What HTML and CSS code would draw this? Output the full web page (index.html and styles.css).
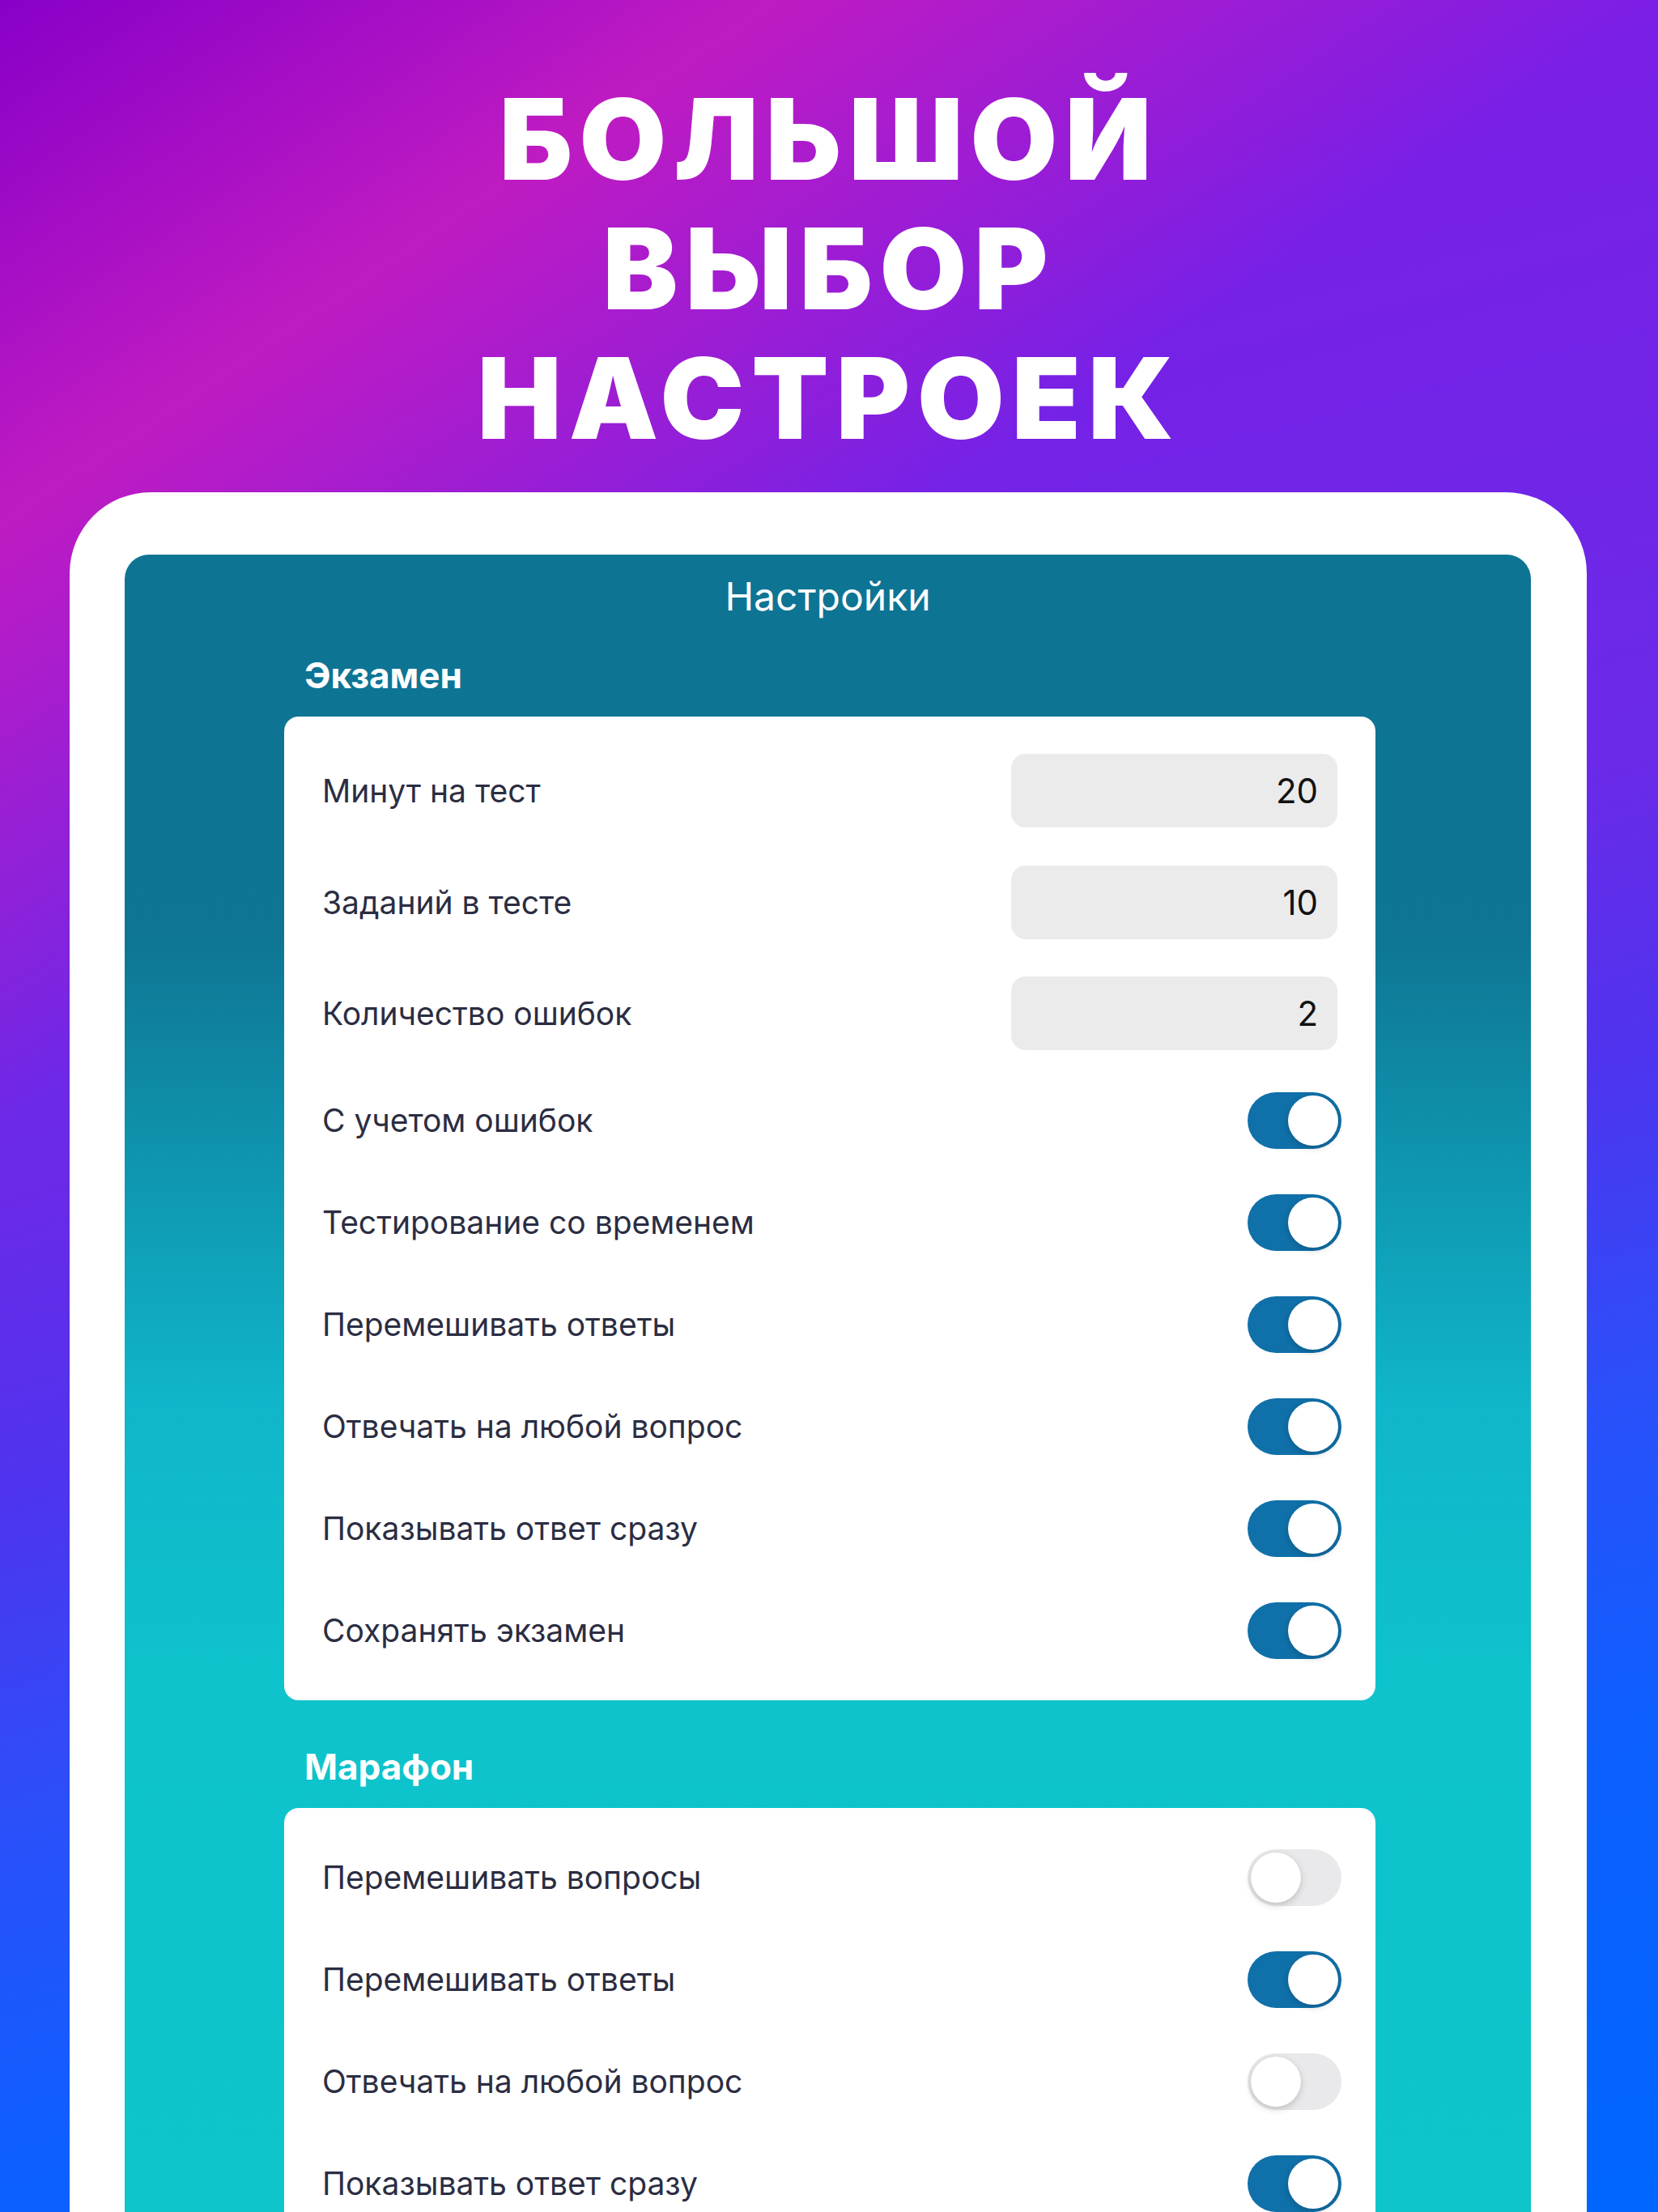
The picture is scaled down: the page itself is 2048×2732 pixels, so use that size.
FILE: index.html
```html
<!DOCTYPE html>
<html lang="ru">
<head>
<meta charset="utf-8">
<title>Большой выбор настроек</title>
<link rel="stylesheet" href="styles.css">
</head>
<body>
<div class="page">
  <h1 class="hero">БОЛЬШОЙ<br>ВЫБОР<br>НАСТРОЕК</h1>
  <div class="device">
    <div class="screen">
      <div class="screen-title">Настройки</div>
      <div class="content">
        <div class="section-title first">Экзамен</div>
        <div class="card">
          <div class="row row-input"><span class="label">Минут на тест</span><span class="field">20</span></div>
          <div class="row row-input"><span class="label">Заданий в тесте</span><span class="field">10</span></div>
          <div class="row row-input"><span class="label">Количество ошибок</span><span class="field">2</span></div>
          <div class="row"><span class="label">С учетом ошибок</span><span class="toggle on"><span class="knob"></span></span></div>
          <div class="row"><span class="label">Тестирование со временем</span><span class="toggle on"><span class="knob"></span></span></div>
          <div class="row"><span class="label">Перемешивать ответы</span><span class="toggle on"><span class="knob"></span></span></div>
          <div class="row"><span class="label">Отвечать на любой вопрос</span><span class="toggle on"><span class="knob"></span></span></div>
          <div class="row"><span class="label">Показывать ответ сразу</span><span class="toggle on"><span class="knob"></span></span></div>
          <div class="row"><span class="label">Сохранять экзамен</span><span class="toggle on"><span class="knob"></span></span></div>
        </div>
        <div class="section-title">Марафон</div>
        <div class="card">
          <div class="row"><span class="label">Перемешивать вопросы</span><span class="toggle"><span class="knob"></span></span></div>
          <div class="row"><span class="label">Перемешивать ответы</span><span class="toggle on"><span class="knob"></span></span></div>
          <div class="row"><span class="label">Отвечать на любой вопрос</span><span class="toggle"><span class="knob"></span></span></div>
          <div class="row"><span class="label">Показывать ответ сразу</span><span class="toggle on"><span class="knob"></span></span></div>
        </div>
      </div>
    </div>
  </div>
</div>
</body>
</html>
```

FILE: styles.css
```css
html, body {
  margin: 0;
  padding: 0;
}
body {
  width: 2048px;
  height: 2732px;
  overflow: hidden;
  font-family: Inter, "Liberation Sans", "Noto Sans", sans-serif;
}
.page {
  width: 2048px;
  height: 2732px;
  overflow: hidden;
  padding-top: 92px;
  box-sizing: border-box;
  background:
    linear-gradient(146deg, #8800c8 0%, #bf1bc2 15.6%, rgba(122, 30, 230, 0) 34%),
    linear-gradient(165deg, #7a1ee6 17%, #6a2ae8 45%, #4f33ee 56%, #2a50fa 69%, #0d60ff 82%, #0066ff 100%);
}
.hero {
  margin: 0;
  text-align: center;
  color: #ffffff;
  font-family: Inter, "Liberation Sans", sans-serif;
  font-weight: 900;
  font-size: 139px;
  line-height: 160px;
  letter-spacing: 9px;
}
.device {
  margin: 36px 0 0 86px;
  width: 1874px;
  height: 2200px;
  box-sizing: border-box;
  padding: 77px 69px 0 68px;
  background: #ffffff;
  border-radius: 100px 100px 0 0;
}
.screen {
  height: 2200px;
  padding-top: 22px;
  box-sizing: border-box;
  border-radius: 30px 30px 0 0;
  background: linear-gradient(180deg, #0e7494 0px, #0e7594 470px, #0f96b0 760px, #10b6c9 1050px, #0ec3cc 1400px, #0dc5cb 100%);
}
.screen-title {
  text-align: center;
  color: #ffffff;
  font-size: 48px;
  line-height: 60px;
  font-weight: 400;
}
.content {
  margin-left: 197px;
  width: 1348px;
}
.section-title {
  color: #ffffff;
  font-weight: 700;
  font-size: 44px;
  line-height: 52px;
  padding-left: 25px;
  margin-top: 56px;
  margin-bottom: 25px;
}
.section-title.first {
  margin-top: 41px;
}
.card {
  background: #ffffff;
  border-radius: 18px;
  padding: 23px 0;
}
.row {
  height: 126px;
  padding: 0 47px;
  display: flex;
  align-items: center;
  justify-content: space-between;
}
.row-input {
  height: 137.5px;
}
.label {
  color: #2b2d42;
  font-size: 39px;
}
.field {
  width: 403px;
  height: 91px;
  box-sizing: border-box;
  padding-right: 24px;
  border-radius: 18px;
  background: #ebebeb;
  color: #111111;
  font-size: 42px;
  display: flex;
  align-items: center;
  justify-content: flex-end;
}
.toggle {
  width: 116px;
  height: 70px;
  margin-right: -5px;
  border-radius: 35px;
  background: #e9e9eb;
  display: flex;
  align-items: center;
  padding: 0 4px;
  box-sizing: border-box;
  justify-content: flex-start;
}
.toggle.on {
  background: #1070a9;
  justify-content: flex-end;
}
.knob {
  width: 62px;
  height: 62px;
  border-radius: 50%;
  background: #ffffff;
  box-shadow: 0 3px 8px rgba(0, 0, 0, 0.18), 0 0 1px rgba(0, 0, 0, 0.12);
}
```
